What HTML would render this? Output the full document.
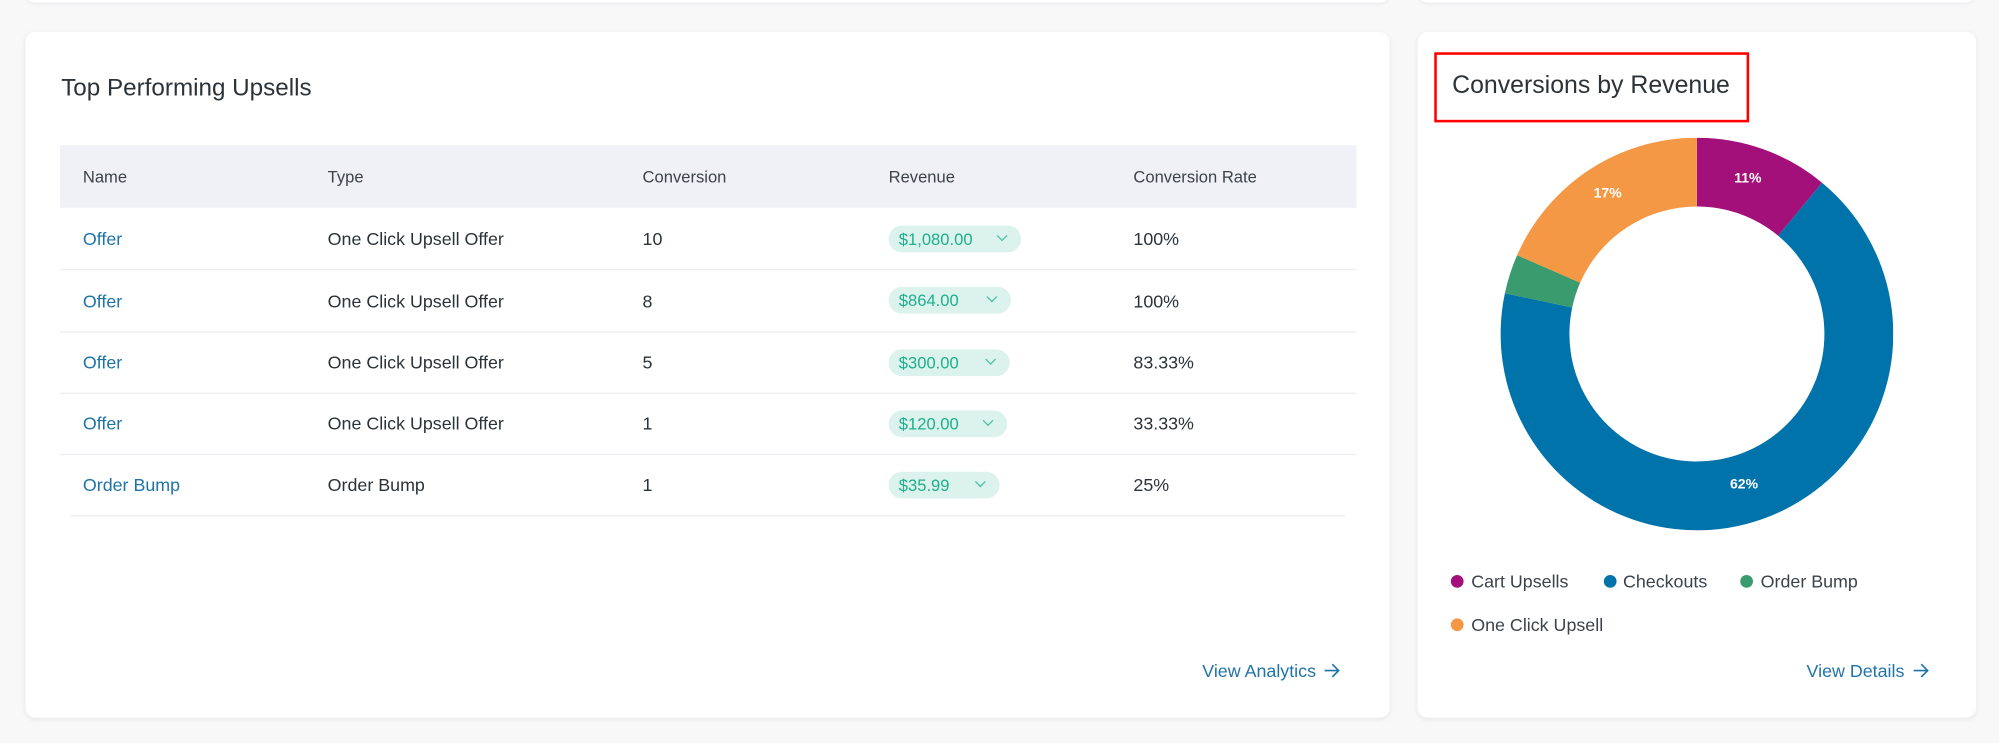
<!DOCTYPE html>
<html><head><meta charset="utf-8"><style>
*{margin:0;padding:0;box-sizing:border-box}
html,body{width:1999px;height:743px;overflow:hidden;background:#f8f8f9;font-family:"Liberation Sans",sans-serif}
#w{position:absolute;left:0;top:0;width:1568px;height:583px;transform:scale(1.2749);transform-origin:0 0}
.topbar{position:absolute;left:20px;top:-20px;width:1070px;height:22px;background:#fff;border-radius:8px;box-shadow:0 1px 4px rgba(0,0,0,.06)}
.topbar2{position:absolute;left:1112px;top:-20px;width:438px;height:22px;background:#fff;border-radius:8px;box-shadow:0 1px 4px rgba(0,0,0,.06)}
.card{position:absolute;background:#fff;border-radius:8px;box-shadow:0 1px 4px rgba(0,0,0,.07)}
.t{position:absolute;white-space:nowrap;color:#2c3338}
.h{font-size:13px;color:#3c434a}
.c{font-size:14px}
.lk{color:#1e73a8}
.line{position:absolute;left:47px;width:1017px;height:1px;background:#eceef2}
.pill{position:absolute;left:697px;height:21px;border-radius:11px;background:#dcf2ec;color:#1eaf8c;font-size:13px;line-height:21px;padding-left:8px}
.pill i{position:absolute;top:5px;width:6px;height:6px;border-right:1.2px solid #4cbf9f;border-bottom:1.2px solid #4cbf9f;transform:rotate(45deg)}
.dot{position:absolute;width:10px;height:10px;border-radius:50%}
.arr{display:inline-block;vertical-align:middle;margin-left:6px;margin-top:-2px}
</style></head><body><div id="w">
<div class="topbar"></div><div class="topbar2"></div>
<div class="card" style="left:20px;top:25px;width:1070px;height:538px"></div>
<div class="t" style="left:48px;top:59px;font-size:19px;color:#2c3338">Top Performing Upsells</div>
<div style="position:absolute;left:47px;top:114px;width:1017px;height:49px;background:#f0f1f6"></div>
<div class="t h" style="left:65px;top:131px">Name</div>
<div class="t h" style="left:257px;top:131px">Type</div>
<div class="t h" style="left:504px;top:131px">Conversion</div>
<div class="t h" style="left:697px;top:131px">Revenue</div>
<div class="t h" style="left:889px;top:131px">Conversion Rate</div>

<div class="t c lk" style="left:65px;top:179px">Offer</div><div class="t c" style="left:257px;top:179px">One Click Upsell Offer</div><div class="t c" style="left:504px;top:179px">10</div><div class="pill" style="top:177px;width:104px">$1,080.00<i style="left:86px"></i></div><div class="t c" style="left:889px;top:179px">100%</div>
<div class="line" style="top:211px"></div>
<div class="t c lk" style="left:65px;top:228px">Offer</div><div class="t c" style="left:257px;top:228px">One Click Upsell Offer</div><div class="t c" style="left:504px;top:228px">8</div><div class="pill" style="top:225px;width:96px">$864.00<i style="left:78px"></i></div><div class="t c" style="left:889px;top:228px">100%</div>
<div class="line" style="top:260px"></div>
<div class="t c lk" style="left:65px;top:276px">Offer</div><div class="t c" style="left:257px;top:276px">One Click Upsell Offer</div><div class="t c" style="left:504px;top:276px">5</div><div class="pill" style="top:274px;width:95px">$300.00<i style="left:77px"></i></div><div class="t c" style="left:889px;top:276px">83.33%</div>
<div class="line" style="top:308px"></div>
<div class="t c lk" style="left:65px;top:324px">Offer</div><div class="t c" style="left:257px;top:324px">One Click Upsell Offer</div><div class="t c" style="left:504px;top:324px">1</div><div class="pill" style="top:322px;width:93px">$120.00<i style="left:75px"></i></div><div class="t c" style="left:889px;top:324px">33.33%</div>
<div class="line" style="top:356px"></div>
<div class="t c lk" style="left:65px;top:372px">Order Bump</div><div class="t c" style="left:257px;top:372px">Order Bump</div><div class="t c" style="left:504px;top:372px">1</div><div class="pill" style="top:370px;width:87px">$35.99<i style="left:69px"></i></div><div class="t c" style="left:889px;top:372px">25%</div>
<div class="line" style="top:404px;left:55px;width:1000px"></div>
<div class="t lk" style="left:943px;top:518px;font-size:14px">View Analytics<svg class="arr" width="13" height="12" viewBox="0 0 13 12"><path d="M1 6H12M7 1L12 6L7 11" fill="none" stroke="#1e73a8" stroke-width="1.3"/></svg></div>

<div class="card" style="left:1112px;top:25px;width:438px;height:538px"></div>
<div style="position:absolute;left:1125px;top:41px;width:247px;height:55px;border:2.5px solid #f00"></div>
<div class="t" style="left:1139px;top:56px;font-size:19.5px">Conversions by Revenue</div>
<svg style="position:absolute;left:1177px;top:108px" width="308" height="308" viewBox="-154 -154 308 308">
<path d="M0,-154A154,154 0 0 1 98.2,-118.7L63.7,-77.1A100,100 0 0 0 0,-100Z" fill="#a3107a"/>
<path d="M98.2,-118.7A154,154 0 1 1 -150.6,-32L-97.8,-20.8A100,100 0 1 0 63.7,-77.1Z" fill="#0073aa"/>
<path d="M-150.6,-32A154,154 0 0 1 -141,-61.9L-91.6,-40.2A100,100 0 0 0 -97.8,-20.8Z" fill="#3a9b6e"/>
<path d="M-141,-61.9A154,154 0 0 1 0,-154L0,-100A100,100 0 0 0 -91.6,-40.2Z" fill="#f59845"/>
<g fill="#fff" font-family="Liberation Sans" font-weight="bold" font-size="11" text-anchor="middle">
<text x="40" y="-119">11%</text><text x="-70" y="-107">17%</text><text x="37" y="121">62%</text></g>
</svg>
<div class="dot" style="left:1138px;top:451px;background:#a3107a"></div><div class="t" style="left:1154px;top:448px;font-size:14px;color:#3c434a">Cart Upsells</div>
<div class="dot" style="left:1258px;top:451px;background:#0073aa"></div><div class="t" style="left:1273px;top:448px;font-size:14px;color:#3c434a">Checkouts</div>
<div class="dot" style="left:1365px;top:451px;background:#3a9b6e"></div><div class="t" style="left:1381px;top:448px;font-size:14px;color:#3c434a">Order Bump</div>
<div class="dot" style="left:1138px;top:485px;background:#f59845"></div><div class="t" style="left:1154px;top:482px;font-size:14px;color:#3c434a">One Click Upsell</div>
<div class="t lk" style="left:1417px;top:518px;font-size:14px">View Details<svg class="arr" width="13" height="12" viewBox="0 0 13 12"><path d="M1 6H12M7 1L12 6L7 11" fill="none" stroke="#1e73a8" stroke-width="1.3"/></svg></div>
</div></body></html>
